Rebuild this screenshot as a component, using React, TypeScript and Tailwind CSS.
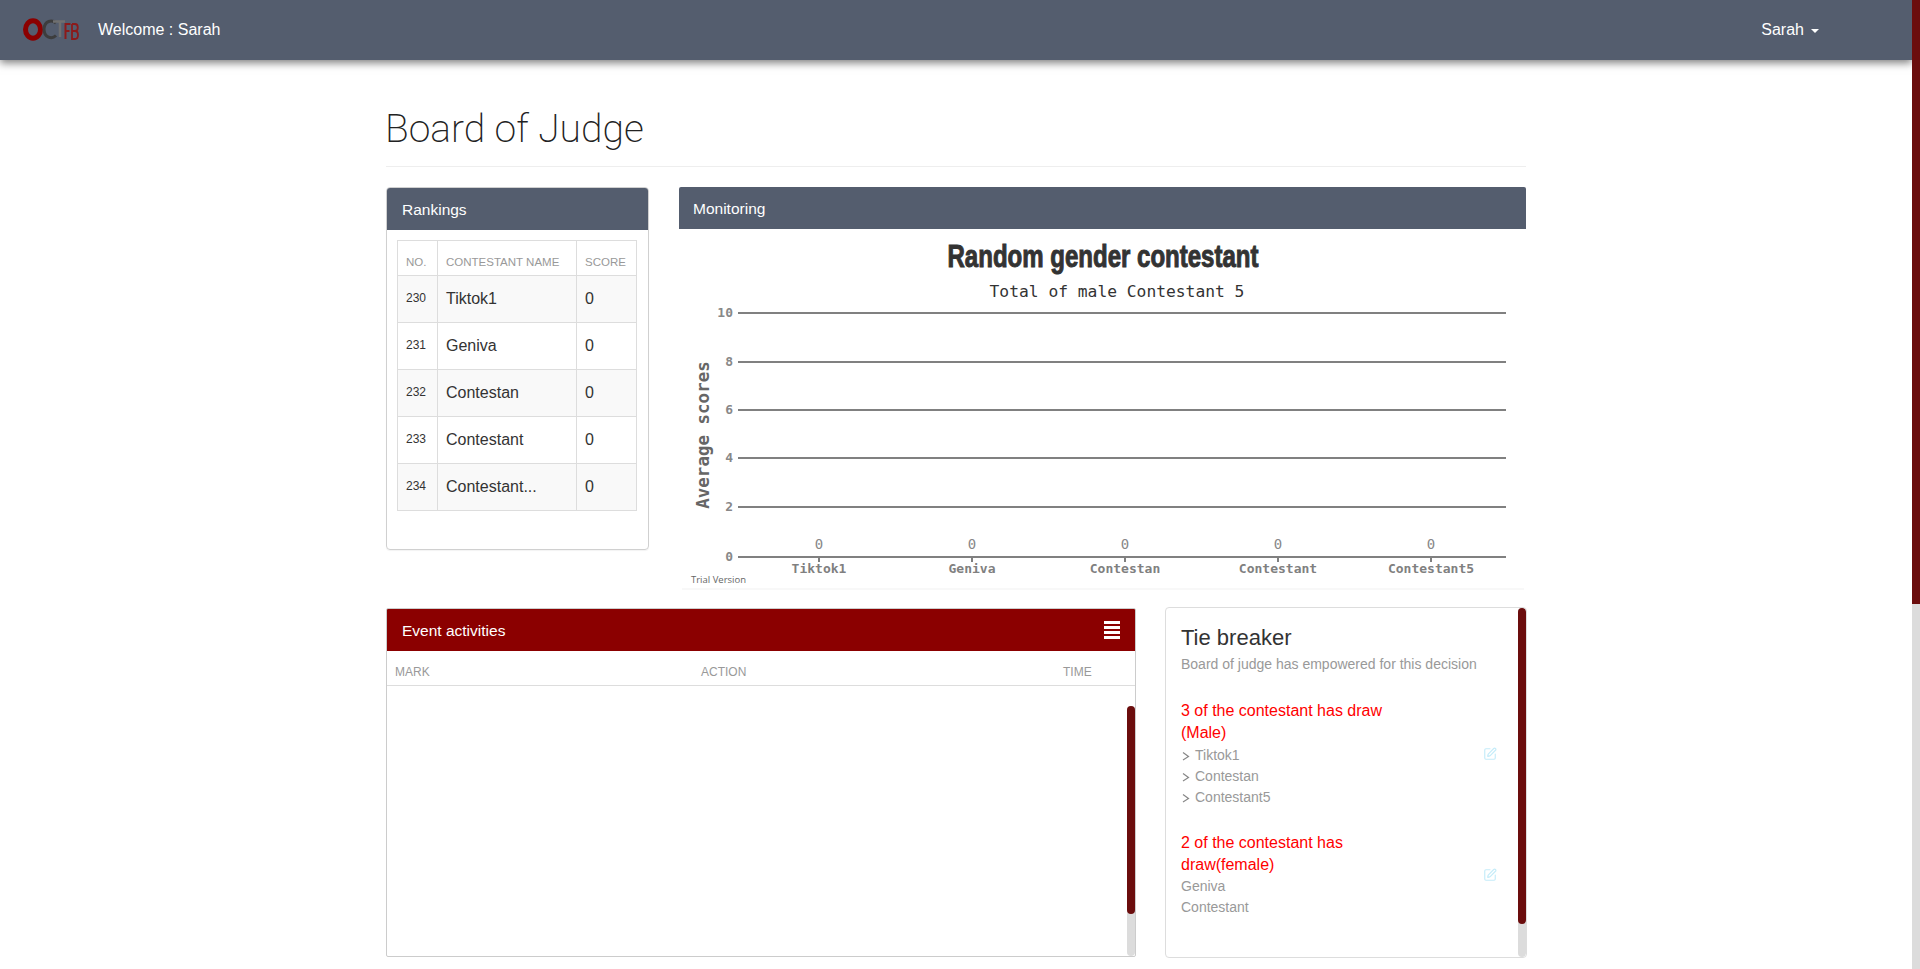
import { SquarePen } from "lucide-react";

const rankings = [
  { no: 230, name: "Tiktok1", score: 0 },
  { no: 231, name: "Geniva", score: 0 },
  { no: 232, name: "Contestan", score: 0 },
  { no: 233, name: "Contestant", score: 0 },
  { no: 234, name: "Contestant...", score: 0 },
];

const ticks = [
  { label: "10", y: 84 },
  { label: "8", y: 133 },
  { label: "6", y: 181 },
  { label: "4", y: 229 },
  { label: "2", y: 278 },
  { label: "0", y: 328 },
];

const categories = [
  { label: "Tiktok1", x: 140 },
  { label: "Geniva", x: 293 },
  { label: "Contestan", x: 446 },
  { label: "Contestant", x: 599 },
  { label: "Contestant5", x: 752 },
];

const mono = '"DejaVu Sans Mono", monospace';

function Logo() {
  return (
    <svg width="56" height="24" viewBox="0 0 56 24" fill="none" className="shrink-0">
      <ellipse cx="10" cy="11.5" rx="7.5" ry="8.7" stroke="#8b0000" strokeWidth="5" />
      <path d="M33 5 C29 1.5 21.5 2.5 21 11 C21 20 29 21.5 33 17.5" stroke="#3d3d3d" strokeWidth="3" />
      <path d="M30 3.5 H42 M37 3.5 V19" stroke="#707070" strokeWidth="2.5" />
      <path d="M42.5 21 V6 H47.5 M42.5 13 H46.5" stroke="#8b1a1a" strokeWidth="2" />
      <path d="M49 6 H52 Q54.8 6 54.8 9.5 Q54.8 13 52 13 H49 M52 13 Q55 13 55 17 Q55 21 52 21 H49 V6" stroke="#8b1a1a" strokeWidth="1.8" />
    </svg>
  );
}

function Scrollbar({ thumb }: { thumb: string }) {
  return (
    <div className="absolute top-0 right-0 bottom-0 w-2 rounded-full bg-[#dcdcdc]">
      <div className={`w-2 rounded-full bg-[#6b0d0d] ${thumb}`} />
    </div>
  );
}

function RankingsPanel() {
  return (
    <div className="h-[363px] w-[263px] shrink-0 overflow-hidden rounded-[4px] border border-[#d0d0d0] shadow-[0_1px_1px_rgba(0,0,0,0.05)]">
      <div className="flex h-[42px] items-center bg-[#545d6e] px-[15px] pt-[2px] text-[15.5px] text-white">Rankings</div>
      <div className="px-[10px] pt-[10px]">
        <table className="w-[239px] table-fixed border-collapse border border-[#dddddd]">
          <colgroup>
            <col className="w-[40px]" />
            <col className="w-[139px]" />
            <col className="w-[60px]" />
          </colgroup>
          <thead>
            <tr className="h-[35px] text-left text-[11.5px] text-[#999999]">
              <th className="border border-[#dddddd] pt-[9px] pl-2 font-normal">NO.</th>
              <th className="border border-[#dddddd] pt-[9px] pl-2 font-normal">CONTESTANT NAME</th>
              <th className="border border-[#dddddd] pt-[9px] pl-2 font-normal">SCORE</th>
            </tr>
          </thead>
          <tbody>
            {rankings.map((row, i) => (
              <tr key={row.no} className={`h-[47px] ${i % 2 === 0 ? "bg-[#f9f9f9]" : "bg-white"}`}>
                <td className="border border-[#dddddd] pb-[2px] pl-2 text-[12px] text-[#333333]">{row.no}</td>
                <td className="border border-[#dddddd] pb-px pl-2 text-[16px] text-[#333333]">{row.name}</td>
                <td className="border border-[#dddddd] pb-px pl-2 text-[16px] text-[#333333]">{row.score}</td>
              </tr>
            ))}
          </tbody>
        </table>
      </div>
    </div>
  );
}

function MonitoringChart() {
  return (
    <svg width="847" height="361" viewBox="0 0 847 361" className="block">
      <path d="M3 360 H845" stroke="#f1f1f1" />
      <text
        x="424"
        y="38"
        textAnchor="middle"
        textLength="311"
        lengthAdjust="spacingAndGlyphs"
        fontFamily='"Liberation Sans", sans-serif'
        fontWeight="700"
        fontSize="31"
        fill="#333"
        stroke="#333"
        strokeWidth="1"
      >
        Random gender contestant
      </text>
      <text x="438" y="68" textAnchor="middle" fontFamily={mono} fontSize="16.3" fill="#333">
        Total of male Contestant 5
      </text>
      {ticks.map((t) => (
        <g key={t.label}>
          <path d={`M59 ${t.y} H827`} stroke="#808080" strokeWidth="2" />
          <text x="54" y={t.y + 4} textAnchor="end" fontFamily={mono} fontSize="13" fontWeight="700" fill="#888">
            {t.label}
          </text>
        </g>
      ))}
      <text transform="translate(30 206) rotate(-90)" textAnchor="middle" fontFamily={mono} fontSize="17.5" fontWeight="700" fill="#666">
        Average scores
      </text>
      {categories.map((c) => (
        <g key={c.label}>
          <path d={`M${c.x} 328 V333`} stroke="#808080" strokeWidth="2" />
          <text x={c.x} y="320" textAnchor="middle" fontFamily={mono} fontSize="14" fill="#888">
            0
          </text>
          <text x={c.x} y="344" textAnchor="middle" fontFamily={mono} fontSize="13" fontWeight="700" fill="#808080">
            {c.label}
          </text>
        </g>
      ))}
      <text x="12" y="354" fontFamily='"Open Sans", sans-serif' fontSize="9.5" fill="#666">
        Trial Version
      </text>
    </svg>
  );
}

function EventPanel() {
  return (
    <div className="relative mt-[1px] h-[349px] w-[750px] shrink-0 overflow-hidden rounded-[2px] border border-[#cccccc]">
      <div className="flex h-[42px] items-center justify-between bg-[#8b0000] px-[15px] text-[15.5px] text-white">
        <span className="pt-[2px]">Event activities</span>
        <div className="flex w-4 flex-col gap-[2px]">
          <div className="h-[3px] bg-white" />
          <div className="h-[3px] bg-white" />
          <div className="h-[3px] bg-white" />
          <div className="h-[3px] bg-white" />
        </div>
      </div>
      <div className="flex h-[35px] items-center border-b border-[#dddddd] pt-[8px] pl-2 text-[12px] text-[#999999]">
        <span className="w-[306px]">MARK</span>
        <span className="w-[362px]">ACTION</span>
        <span>TIME</span>
      </div>
      <div className="absolute top-[97px] right-0 bottom-0 w-2">
        <Scrollbar thumb="h-[208px]" />
      </div>
    </div>
  );
}

function Chevron() {
  return (
    <svg width="8" height="10" viewBox="0 0 8 10" fill="none" className="mr-[5px] ml-px shrink-0">
      <path d="M1 1.5 L6.5 5.5 L1 9" stroke="#888888" strokeWidth="1.2" />
    </svg>
  );
}

function TieBreakerPanel() {
  return (
    <div className="relative h-[351px] w-[362px] shrink-0 overflow-hidden rounded-[4px] border border-[#dddddd] pt-[16px] pl-[15px]">
      <Scrollbar thumb="h-[316px]" />
      <h3 className="text-[22px] leading-[28px] text-[#333333]">Tie breaker</h3>
      <p className="mt-[2px] text-[14px] leading-5 text-[#999999]">Board of judge has empowered for this decision</p>
      <div className="mt-[26px] flex w-[316px] items-center justify-between">
        <div className="w-[220px]">
          <p className="mb-px text-[16px] leading-[22px] text-[#ff0000]">3 of the contestant has draw (Male)</p>
          {["Tiktok1", "Contestan", "Contestant5"].map((name) => (
            <div key={name} className="flex h-[21px] items-center text-[14px] text-[#999999]">
              <Chevron />
              {name}
            </div>
          ))}
        </div>
        <SquarePen size={14} className="text-[#c5ecf9]" />
      </div>
      <div className="mt-[24px] flex w-[316px] items-center justify-between">
        <div className="w-[220px]">
          <p className="text-[16px] leading-[22px] text-[#ff0000]">2 of the contestant has draw(female)</p>
          {["Geniva", "Contestant"].map((name) => (
            <div key={name} className="flex h-[21px] items-center text-[14px] text-[#999999]">
              {name}
            </div>
          ))}
        </div>
        <SquarePen size={14} className="text-[#c5ecf9]" />
      </div>
      <div className="mt-[41px] ml-[5px] h-px w-[312px] bg-[#dddddd]" />
    </div>
  );
}

export default function App() {
  return (
    <div className="relative h-[969px] w-[1920px] overflow-hidden bg-white font-['Liberation_Sans',sans-serif]">
      <div className="w-[1912px]">
        <nav className="flex h-[60px] items-center justify-between bg-[#545d6e] pr-[93px] pl-[23px] text-[16px] text-white shadow-[0_3px_8px_rgba(0,0,0,0.5)]">
          <div className="flex items-center">
            <Logo />
            <span className="ml-[19px]">Welcome : Sarah</span>
          </div>
          <div className="flex items-center gap-[7px]">
            <span>Sarah</span>
            <span className="mt-[2px] h-0 w-0 border-x-4 border-t-4 border-x-transparent border-t-white" />
          </div>
        </nav>
        <main className="mx-auto w-[1140px]">
          <div className="border-b border-[#eeeeee] pt-[47px] pb-[14px]">
            <h1 className="-ml-px font-['Roboto',sans-serif] text-[39px] leading-[45px] font-extralight text-[#222222]">Board of Judge</h1>
          </div>
          <div className="mt-[20px] flex gap-[30px]">
            <RankingsPanel />
            <div className="h-[403px] w-[847px]">
              <div className="flex h-[42px] items-center rounded-t-[2px] bg-[#545d6e] px-[14px] pt-px text-[15.5px] text-white">Monitoring</div>
              <MonitoringChart />
            </div>
          </div>
          <div className="mt-[17px] flex gap-[29px]">
            <EventPanel />
            <TieBreakerPanel />
          </div>
        </main>
      </div>
      <div className="absolute top-0 right-0 bottom-0 w-2 bg-[#dcdcdc]">
        <div className="h-[604px] w-2 bg-[#6b0d0d]" />
      </div>
    </div>
  );
}
